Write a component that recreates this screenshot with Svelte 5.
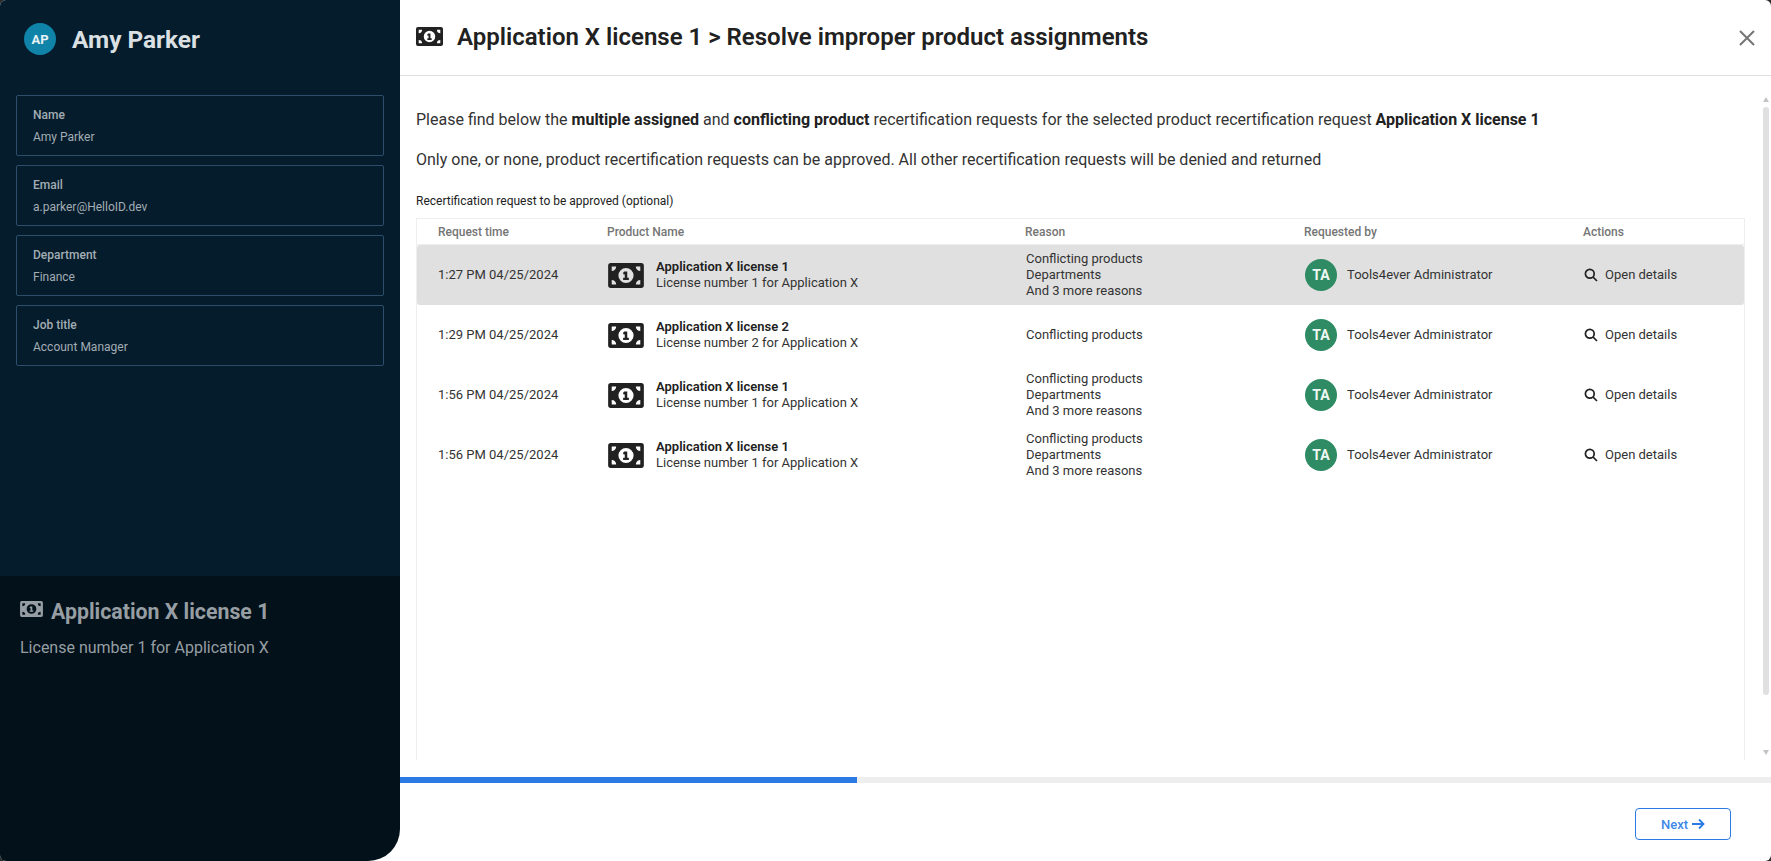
<script>
	const fields = [
		{ label: 'Name', value: 'Amy Parker' },
		{ label: 'Email', value: 'a.parker@HelloID.dev' },
		{ label: 'Department', value: 'Finance' },
		{ label: 'Job title', value: 'Account Manager' }
	];

	const threeReasons = ['Conflicting products', 'Departments', 'And 3 more reasons'];

	const requests = [
		{ time: '1:27 PM 04/25/2024', name: 'Application X license 1', description: 'License number 1 for Application X', reasons: threeReasons, selected: true },
		{ time: '1:29 PM 04/25/2024', name: 'Application X license 2', description: 'License number 2 for Application X', reasons: ['Conflicting products'], selected: false },
		{ time: '1:56 PM 04/25/2024', name: 'Application X license 1', description: 'License number 1 for Application X', reasons: threeReasons, selected: false },
		{ time: '1:56 PM 04/25/2024', name: 'Application X license 1', description: 'License number 1 for Application X', reasons: threeReasons, selected: false }
	];

	const billPath =
		'M3 0H37A3 3 0 0 1 40 3V25A3 3 0 0 1 37 28H3A3 3 0 0 1 0 25V3A3 3 0 0 1 3 0Z' +
		'M20 5.5A8.5 8.5 0 1 0 20 22.5A8.5 8.5 0 1 0 20 5.5Z' +
		'M4 4V9A5 5 0 0 0 9 4Z M36 4H31A5 5 0 0 0 36 9Z M4 24H9A5 5 0 0 0 4 19Z M36 24V19A5 5 0 0 0 31 24Z';
	const onePath = 'M18 9.5H21.4V16.5H23.2V19H16.8V16.5H18.6V12.6L17.6 13.2L16.6 11.2Z';
</script>

{#snippet bill(cls)}
	<svg class={cls} viewBox="0 0 40 28" aria-hidden="true">
		<path fill-rule="evenodd" d={billPath} />
		<path d={onePath} />
	</svg>
{/snippet}

<div class="modal">
	<aside class="side">
		<div class="person">
			<div class="person-head">
				<span class="avatar">AP</span>
				<h2>Amy Parker</h2>
			</div>
			<div class="fields">
				{#each fields as field}
					<div class="field">
						<strong>{field.label}</strong>
						<span>{field.value}</span>
					</div>
				{/each}
			</div>
		</div>
		<div class="product">
			<h3>{@render bill('bill-side')}Application X license 1</h3>
			<p>License number 1 for Application X</p>
		</div>
	</aside>

	<main class="main">
		<header class="top">
			{@render bill('bill-top')}
			<h1>Application X license 1 &gt; Resolve improper product assignments</h1>
			<button class="close" aria-label="Close">
				<svg viewBox="0 0 16 16"><path d="M1 1L15 15M15 1L1 15" /></svg>
			</button>
		</header>

		<section class="body">
			<p>Please find below the <b>multiple assigned</b> and <b>conflicting product</b> recertification requests for the selected product recertification request <b>Application X license 1</b></p>
			<p>Only one, or none, product recertification requests can be approved. All other recertification requests will be denied and returned</p>
			<div class="table-label">Recertification request to be approved (optional)</div>
			<div class="table">
				<div class="row head">
					<div>Request time</div>
					<div>Product Name</div>
					<div>Reason</div>
					<div>Requested by</div>
					<div>Actions</div>
				</div>
				{#each requests as request}
					<div class="row item" class:selected={request.selected}>
						<div>{request.time}</div>
						<div class="prod">
							{@render bill('bill-row')}
							<div>
								<b>{request.name}</b>
								<div>{request.description}</div>
							</div>
						</div>
						<div>
							{#each request.reasons as reason}
								<div>{reason}</div>
							{/each}
						</div>
						<div class="by">
							<span class="badge">TA</span>
							<span>Tools4ever Administrator</span>
						</div>
						<div class="action">
							<svg viewBox="0 0 14 14"><circle cx="5.8" cy="5.8" r="4.4" /><path d="M9 9L13 13" /></svg>
							<span>Open details</span>
						</div>
					</div>
				{/each}
			</div>
			<div class="scrollbar">
				<i class="up"></i>
				<i class="thumb"></i>
				<i class="down"></i>
			</div>
		</section>

		<div class="progress"><div class="progress-fill" style="width: 33.3%"></div></div>

		<footer class="foot">
			<button class="next">Next
				<svg viewBox="0 0 14 12"><path d="M1 6H12.5M8 1.5L12.5 6L8 10.5" /></svg>
			</button>
		</footer>
	</main>
</div>

<style>
	:global(body) {
		margin: 0;
		background: #2b2b2b;
	}

	.modal {
		display: flex;
		width: 1771px;
		height: 861px;
		overflow: hidden;
		background: #fff;
		border-radius: 6px;
		font-family: Roboto, sans-serif;
		color: #212121;
	}

	.side {
		width: 400px;
		flex: none;
		display: flex;
		flex-direction: column;
		border-bottom-right-radius: 32px;
		overflow: hidden;
	}

	.person {
		height: 576px;
		box-sizing: border-box;
		background: #051c2c;
		padding: 23px 16px 0;
	}

	.person-head {
		display: flex;
		align-items: center;
		gap: 16px;
		padding-left: 8px;
		height: 32px;
	}

	.avatar {
		width: 32px;
		height: 32px;
		border-radius: 50%;
		background: #0f83a8;
		color: #e8f2f6;
		font-size: 13px;
		font-weight: 700;
		display: flex;
		align-items: center;
		justify-content: center;
	}

	.person-head h2 {
		margin: 0;
		font-size: 24.4px;
		font-weight: 700;
		color: #dbe0e3;
	}

	.fields {
		display: flex;
		flex-direction: column;
		gap: 9px;
		margin-top: 40px;
	}

	.field {
		height: 61px;
		box-sizing: border-box;
		border: 1px solid #2d4e6b;
		border-radius: 2px;
		padding: 11px 16px;
		display: flex;
		flex-direction: column;
		gap: 6px;
		font-size: 12px;
		line-height: 16px;
		color: #a3adb4;
	}

	.field strong {
		font-weight: 500;
	}

	.product {
		flex: 1;
		background: #02111a;
		padding: 21px 20px;
		color: #979ea3;
	}

	.product h3 {
		margin: 0;
		font-size: 21.3px;
		line-height: 30px;
		font-weight: 700;
		display: flex;
		align-items: center;
		gap: 8px;
	}

	.product p {
		margin: 11px 0 0;
		font-size: 16px;
		line-height: 20px;
	}

	.bill-side {
		width: 23px;
		height: 16px;
		fill: #979ea3;
		margin-top: -6px;
	}

	.main {
		flex: 1;
		min-width: 0;
		display: flex;
		flex-direction: column;
	}

	.top {
		height: 76px;
		flex: none;
		display: flex;
		align-items: center;
		box-sizing: border-box;
		padding: 0 16px;
		border-bottom: 1px solid #e0e0e0;
	}

	.bill-top {
		width: 27px;
		height: 19px;
		fill: #212121;
		margin-top: -3px;
	}

	.top h1 {
		margin: 0 0 2px 14px;
		flex: 1;
		font-size: 24px;
		font-weight: 650;
	}

	.close {
		width: 16px;
		height: 16px;
		padding: 0;
		border: 0;
		background: none;
	}

	.close svg {
		display: block;
		stroke: #757575;
		stroke-width: 2;
		fill: none;
	}

	.body {
		position: relative;
		flex: 1;
		min-height: 0;
		padding: 34px 26px 0 16px;
		font-size: 16px;
		line-height: 20px;
	}

	.body > p {
		margin: 0 0 20px;
		color: #333;
	}

	.body b {
		font-weight: 700;
		color: #212121;
	}

	.table-label {
		margin-top: 23px;
		font-size: 12px;
		line-height: 16px;
	}

	.table {
		margin-top: 9px;
		height: 542px;
		box-sizing: border-box;
		border: 1px solid #eee;
		border-bottom: 0;
	}

	.row {
		display: grid;
		grid-template-columns: 190px 418px 279px 279px 1fr;
		align-items: center;
		font-size: 13px;
		line-height: 16px;
	}

	.head {
		height: 26px;
		color: #757575;
		font-size: 12px;
		font-weight: 500;
		border-bottom: 1px solid #eee;
		box-sizing: border-box;
	}

	.head > div:first-child {
		padding-left: 21px;
	}

	.item {
		height: 60px;
		color: #333;
	}

	.item > div:first-child {
		padding-left: 21px;
	}

	.selected {
		background: #e0e0e0;
		border-radius: 3px;
	}

	.prod {
		display: flex;
		align-items: center;
		gap: 12px;
	}

	.prod b {
		display: block;
		font-weight: 600;
	}

	.bill-row {
		width: 36px;
		height: 25px;
		fill: #212121;
		margin-left: 1px;
	}

	.item > div:nth-child(3) {
		padding-left: 1px;
	}

	.by {
		display: flex;
		align-items: center;
		gap: 10px;
		padding-left: 1px;
	}

	.badge {
		width: 32px;
		height: 32px;
		border-radius: 50%;
		background: #2e8b63;
		color: #f1f8f4;
		font-size: 14px;
		font-weight: 700;
		display: flex;
		align-items: center;
		justify-content: center;
	}

	.action {
		display: flex;
		align-items: center;
		gap: 7px;
		padding-left: 1px;
	}

	.action svg {
		width: 14px;
		height: 14px;
		fill: none;
		stroke: #212121;
		stroke-width: 1.7;
	}

	.scrollbar {
		position: absolute;
		top: 21px;
		bottom: 5px;
		right: 2px;
		width: 6px;
		display: flex;
		flex-direction: column;
		align-items: center;
		gap: 5px;
	}

	.thumb {
		height: 588px;
		flex: none;
		width: 6px;
		background: #e0e0e0;
		border-radius: 3px;
	}

	.up,
	.down {
		width: 0;
		height: 0;
		border-left: 3.5px solid transparent;
		border-right: 3.5px solid transparent;
	}

	.up {
		border-bottom: 5px solid #c4c4c4;
	}

	.down {
		margin-top: auto;
		border-top: 5px solid #c4c4c4;
	}

	.progress {
		height: 6px;
		flex: none;
		margin-top: 17px;
		background: #eee;
	}

	.progress-fill {
		height: 100%;
		background: #2c7be5;
	}

	.foot {
		height: 78px;
		flex: none;
		display: flex;
		justify-content: flex-end;
		align-items: flex-start;
		padding: 25px 40px 0 0;
		box-sizing: border-box;
	}

	.next {
		width: 96px;
		height: 32px;
		border: 1px solid #2c7be5;
		border-radius: 4px;
		background: #fff;
		color: #3d88e8;
		font: 500 13px Roboto, sans-serif;
		display: flex;
		align-items: center;
		justify-content: center;
		gap: 3px;
	}

	.next svg {
		width: 14px;
		height: 12px;
		fill: none;
		stroke: #2c7be5;
		stroke-width: 1.8;
	}
</style>
